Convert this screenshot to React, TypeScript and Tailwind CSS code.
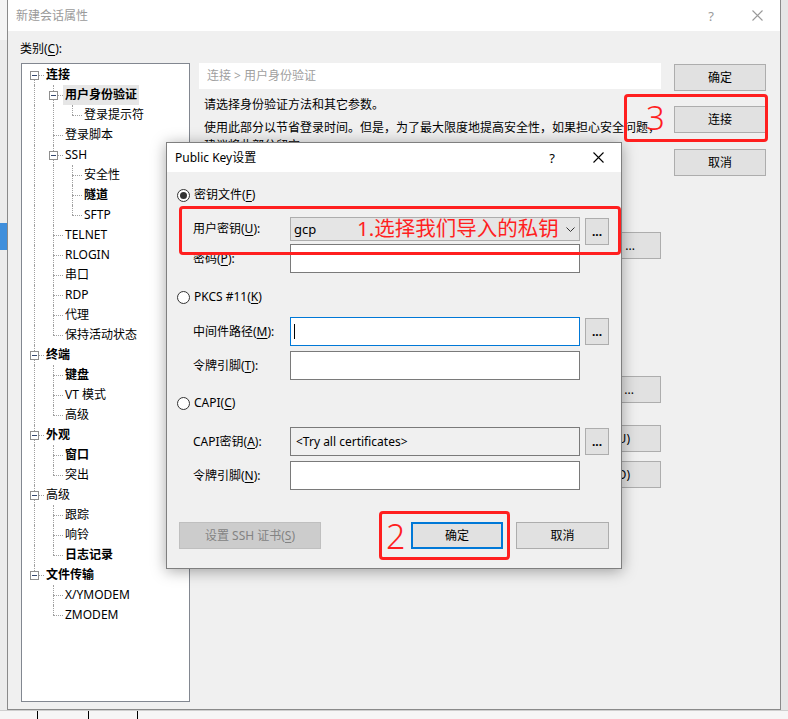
import React from "react";

type TNode = { label: string; bold?: boolean; selected?: boolean; children?: TNode[] };

const tree: TNode[] = [
  {
    label: "连接",
    bold: true,
    children: [
      { label: "用户身份验证", bold: true, selected: true, children: [{ label: "登录提示符" }] },
      { label: "登录脚本" },
      { label: "SSH", children: [{ label: "安全性" }, { label: "隧道", bold: true }, { label: "SFTP" }] },
      { label: "TELNET" },
      { label: "RLOGIN" },
      { label: "串口" },
      { label: "RDP" },
      { label: "代理" },
      { label: "保持活动状态" },
    ],
  },
  { label: "终端", bold: true, children: [{ label: "键盘", bold: true }, { label: "VT 模式" }, { label: "高级" }] },
  { label: "外观", bold: true, children: [{ label: "窗口", bold: true }, { label: "突出" }] },
  { label: "高级", children: [{ label: "跟踪" }, { label: "响铃" }, { label: "日志记录", bold: true }] },
  { label: "文件传输", bold: true, children: [{ label: "X/YMODEM" }, { label: "ZMODEM" }] },
];

type Row = {
  label: string;
  bold?: boolean;
  selected?: boolean;
  hasChildren: boolean;
  isLast: boolean;
  isFirst: boolean;
  cont: boolean[];
};

function flatten(nodes: TNode[], level: number, cont: boolean[], rows: Row[]) {
  nodes.forEach((n, i) => {
    const isLast = i === nodes.length - 1;
    rows.push({
      label: n.label,
      bold: n.bold,
      selected: n.selected,
      hasChildren: !!n.children,
      isLast,
      isFirst: level === 0 && i === 0,
      cont: [...cont],
    });
    if (n.children) flatten(n.children, level + 1, [...cont, !isLast], rows);
  });
}

const rows: Row[] = [];
flatten(tree, 0, [], rows);

const U = ({ c }: { c: string }) => <span className="underline underline-offset-[2px]">{c}</span>;

function TreeRow({ r }: { r: Row }) {
  return (
    <div className="flex h-[20px]">
      {r.cont.map((c, i) => (
        <div key={i} className="w-[19px] shrink-0 pl-[9px]">
          {c && <div className="h-full border-l border-dotted border-[#a0a0a0]" />}
        </div>
      ))}
      <div className="relative w-[19px] shrink-0 grid grid-cols-[9px_10px] grid-rows-[10px_10px]">
        <div />
        <div className={r.isFirst ? "" : "border-l border-dotted border-[#a0a0a0]"} />
        <div />
        <div
          className={
            "border-t border-dotted border-[#a0a0a0] " + (r.isLast ? "" : "border-l border-dotted border-[#a0a0a0]")
          }
        />
        {r.hasChildren && (
          <div className="absolute left-[5px] top-[6px] w-[9px] h-[9px] border border-[#8f8f8f] bg-white flex items-center justify-center">
            <div className="w-[5px] h-px bg-[#33476e]" />
          </div>
        )}
      </div>
      <div
        className={
          "px-[2px] leading-[20px] whitespace-nowrap " +
          (r.bold ? "font-bold " : "") +
          (r.selected ? "bg-[#e6e6e6] " : "")
        }
      >
        {r.label}
      </div>
    </div>
  );
}

function XIcon({ color }: { color: string }) {
  return (
    <svg width="11" height="11" viewBox="0 0 11 11">
      <path d="M0.5 0.5 L10.5 10.5 M10.5 0.5 L0.5 10.5" stroke={color} strokeWidth="1.1" fill="none" />
    </svg>
  );
}

function Btn({ children, className = "" }: { children: React.ReactNode; className?: string }) {
  return (
    <div
      className={
        "h-[27px] flex items-center justify-center bg-[#e1e1e1] border border-[#adadad] whitespace-nowrap " + className
      }
    >
      {children}
    </div>
  );
}

function HiddenBtn({ children, className = "" }: { children: React.ReactNode; className?: string }) {
  return (
    <div
      className={
        "h-[27px] w-[100px] flex items-center justify-end bg-[#e1e1e1] border border-[#adadad] whitespace-nowrap " +
        className
      }
    >
      {children}
    </div>
  );
}

function Radio({ checked }: { checked?: boolean }) {
  return (
    <div className="w-[13px] h-[13px] rounded-full border border-[#333] bg-white flex items-center justify-center">
      {checked && <div className="w-[7px] h-[7px] rounded-full bg-[#333]" />}
    </div>
  );
}

export default function App() {
  return (
    <div className="relative w-[788px] h-[719px] overflow-hidden bg-[#f0f0f0] font-['Noto_Sans','Noto_Sans_CJK_SC',sans-serif] text-[12px] leading-[16px] text-black">
      <div className="flex h-[710px]">
        {/* background app, left */}
        <div className="w-[7px] flex flex-col bg-[#e9e9e9]">
          <div className="h-[40px] bg-[#f4f4f4]" />
          <div className="h-[183px] bg-[#ececec]" />
          <div className="h-[27px] bg-[#3f8fdc]" />
          <div className="flex-1 bg-[#ececec]" />
        </div>

        {/* main window */}
        <div className="w-[774px] flex flex-col border-l border-r border-b border-[#8a8a8a] bg-[#f0f0f0]">
          <div className="h-[31px] shrink-0 bg-white flex items-center">
            <span className="pl-[8px] text-[#9a9a9a]">新建会话属性</span>
            <div className="ml-auto flex h-full">
              <div className="w-[46px] flex items-center justify-center text-[#9a9a9a] text-[13px]">?</div>
              <div className="w-[46px] flex items-center justify-center">
                <XIcon color="#9a9a9a" />
              </div>
            </div>
          </div>

          <div className="flex pl-[12px] pt-[10px]">
            {/* category tree */}
            <div className="flex flex-col">
              <div className="h-[16px]">
                类别(<U c="C" />):
              </div>
              <div className="mt-[6px] ml-[1px] w-[169px] h-[639px] bg-white border border-[#828790] pl-[3px] pt-[1px]">
                {rows.map((r, i) => (
                  <TreeRow key={i} r={r} />
                ))}
              </div>
            </div>

            {/* middle content */}
            <div className="ml-[9px] w-[462px] mt-[22px] flex flex-col">
              <div className="h-[26px] bg-white flex items-center pl-[8px] text-[#a0a0a0]">连接 &gt; 用户身份验证</div>
              <div className="mt-[8px] pl-[5px] whitespace-nowrap">请选择身份验证方法和其它参数。</div>
              <div className="mt-[7px] pl-[5px] whitespace-nowrap">
                使用此部分以节省登录时间。但是，为了最大限度地提高安全性，如果担心安全问题，
              </div>
              <div className="mt-[2px] pl-[5px] whitespace-nowrap">建议将此部分留空。</div>
              <div className="flex flex-col items-end">
                <HiddenBtn className="mt-[78px] pr-[25px]">...</HiddenBtn>
                <HiddenBtn className="mt-[117px] pr-[26px]">...</HiddenBtn>
                <HiddenBtn className="mt-[22px] pr-[30px]">编辑(U)</HiddenBtn>
                <HiddenBtn className="mt-[9px] pr-[30px]">导出(O)</HiddenBtn>
              </div>
            </div>

            {/* right buttons */}
            <div className="ml-[13px] w-[92px] mt-[23px] flex flex-col">
              <Btn>确定</Btn>
              <Btn className="mt-[15px]">连接</Btn>
              <Btn className="mt-[16px]">取消</Btn>
            </div>
          </div>
        </div>

        {/* background app, right */}
        <div className="w-[7px] bg-[#e6e6e6]" />
      </div>

      {/* bottom background strip */}
      <div className="h-[9px] bg-[#f6f6f6] border-t border-[#cfcfcf] flex">
        <div className="w-[37px]" />
        <div className="w-[51px] border-l border-black" />
        <div className="w-[49px] border-l border-black" />
        <div className="w-[10px] border-l border-black" />
      </div>

      {/* Public Key dialog */}
      <div className="absolute left-[166px] top-[142px] w-[456px] h-[427px] border border-[#7f7f7f] bg-[#f0f0f0] shadow-[0_2px_14px_rgba(0,0,0,0.35)] flex flex-col">
        <div className="h-[29px] shrink-0 bg-white flex items-center">
          <span className="pl-[8px]">Public Key设置</span>
          <div className="ml-auto flex h-full">
            <div className="w-[46px] flex items-center justify-center text-[13px]">?</div>
            <div className="w-[46px] flex items-center justify-center">
              <XIcon color="#000" />
            </div>
          </div>
        </div>

        <div className="flex flex-col">
          {/* radio 1 */}
          <div className="mt-[15px] h-[16px] pl-[10px] flex items-center gap-[4px]">
            <Radio checked />
            <span>
              密钥文件(<U c="F" />)
            </span>
          </div>

          {/* user key */}
          <div className="mt-[14px] h-[24px] pl-[26px] flex items-start">
            <div className="w-[97px] mt-[4px]">
              用户密钥(<U c="U" />):
            </div>
            <div className="w-[290px] h-[24px] bg-[#e5e5e5] border border-[#adadad] flex items-center justify-between pl-[3px] pr-[4px]">
              <span className="text-[13px]">gcp</span>
              <svg width="9" height="5" viewBox="0 0 9 5">
                <path d="M0.5 0.5 L4.5 4.5 L8.5 0.5" stroke="#333" strokeWidth="1" fill="none" />
              </svg>
            </div>
            <Btn className="ml-[5px] mt-[1px] w-[24px] font-bold">...</Btn>
          </div>

          {/* password */}
          <div className="mt-[3px] h-[29px] pl-[26px] flex items-center">
            <div className="w-[97px]">
              密码(<U c="P" />):
            </div>
            <div className="w-[290px] h-[29px] bg-white border border-[#7a7a7a]" />
          </div>

          {/* radio 2 */}
          <div className="mt-[16px] h-[16px] pl-[10px] flex items-center gap-[4px]">
            <Radio />
            <span>
              PKCS #11(<U c="K" />)
            </span>
          </div>

          {/* middleware */}
          <div className="mt-[12px] h-[29px] pl-[26px] flex items-center">
            <div className="w-[97px]">
              中间件路径(<U c="M" />):
            </div>
            <div className="w-[290px] h-[29px] bg-white border border-[#0078d7] flex items-center">
              <div className="ml-[3px] w-px h-[15px] bg-black" />
            </div>
            <Btn className="ml-[5px] w-[24px] font-bold">...</Btn>
          </div>

          {/* token T */}
          <div className="mt-[5px] h-[29px] pl-[26px] flex items-center">
            <div className="w-[97px]">
              令牌引脚(<U c="T" />):
            </div>
            <div className="w-[290px] h-[29px] bg-white border border-[#7a7a7a]" />
          </div>

          {/* radio 3 */}
          <div className="mt-[15px] h-[16px] pl-[10px] flex items-center gap-[4px]">
            <Radio />
            <span>
              CAPI(<U c="C" />)
            </span>
          </div>

          {/* CAPI key */}
          <div className="mt-[16px] h-[29px] pl-[26px] flex items-center">
            <div className="w-[97px]">
              CAPI密钥(<U c="A" />):
            </div>
            <div className="w-[290px] h-[29px] bg-[#f0f0f0] border border-[#7a7a7a] flex items-center pl-[5px]">
              &lt;Try all certificates&gt;
            </div>
            <Btn className="ml-[5px] w-[24px] font-bold">...</Btn>
          </div>

          {/* token N */}
          <div className="mt-[5px] h-[29px] pl-[26px] flex items-center">
            <div className="w-[97px]">
              令牌引脚(<U c="N" />):
            </div>
            <div className="w-[290px] h-[29px] bg-white border border-[#7a7a7a]" />
          </div>

          {/* bottom buttons */}
          <div className="mt-[32px] pl-[12px] flex">
            <div className="w-[142px] h-[27px] bg-[#cccccc] border border-[#bfbfbf] flex items-center justify-center text-[#838383]">
              设置 SSH 证书(<U c="S" />)
            </div>
            <div className="ml-[90px] w-[92px] h-[27px] bg-[#e1e1e1] border-2 border-[#0078d7] flex items-center justify-center">
              确定
            </div>
            <Btn className="ml-[13px] w-[93px]">取消</Btn>
          </div>
        </div>
      </div>

      {/* annotations */}
      <div className="absolute left-[179px] top-[206px] w-[442px] h-[49px] border-[3px] border-[#ff1f1f] rounded-[4px] pl-[175px] pt-[7px]">
        <span className="text-[20.5px] leading-[24px] text-[#ff1f1f] whitespace-nowrap">1.选择我们导入的私钥</span>
      </div>
      <div className="absolute left-[379px] top-[511px] w-[131px] h-[49px] border-[3px] border-[#ff1f1f] rounded-[4px] pl-[4px] flex items-center">
        <span className="text-[34px] leading-[40px] text-[#ff1f1f] font-light">2</span>
      </div>
      <div className="absolute left-[624px] top-[94px] w-[144px] h-[48px] border-[3px] border-[#ff1f1f] rounded-[4px] pl-[19px] flex items-center">
        <span className="text-[33px] leading-[40px] text-[#ff1f1f] font-light">3</span>
      </div>
    </div>
  );
}
